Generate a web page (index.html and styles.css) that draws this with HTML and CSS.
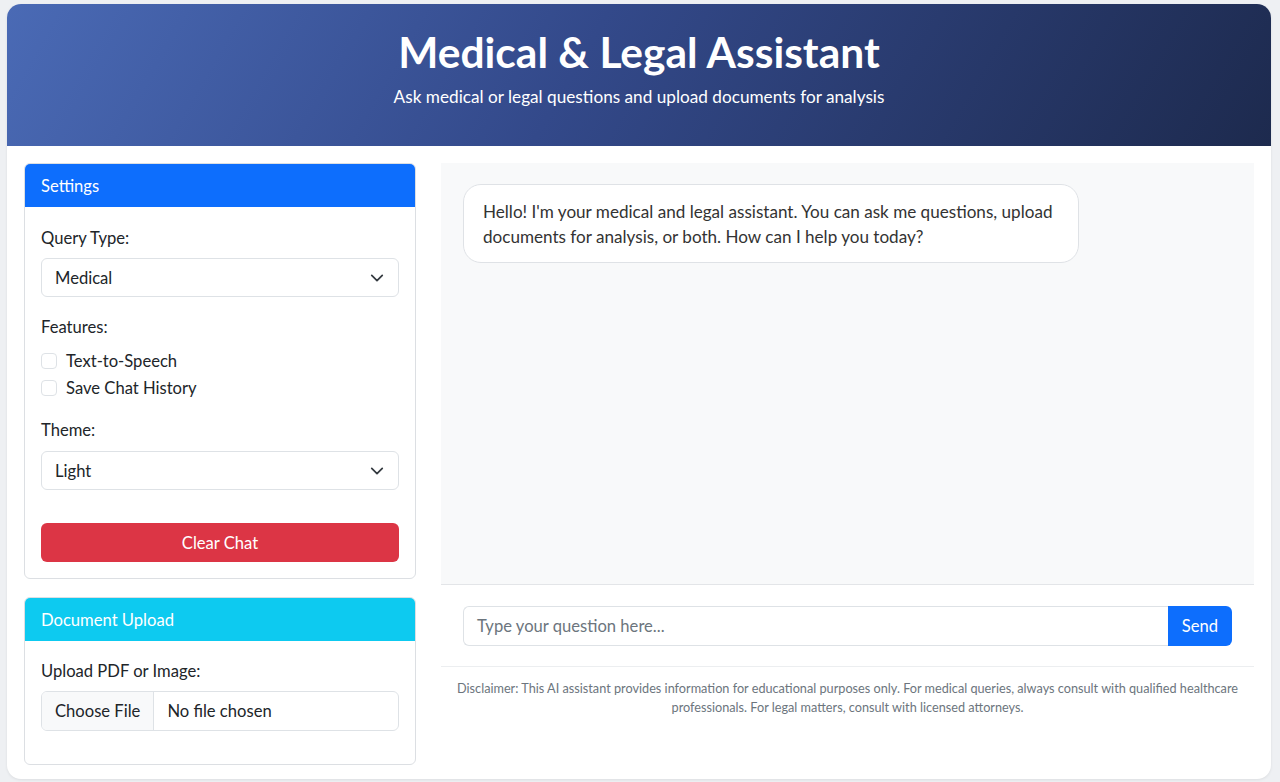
FILE: index.html
```html
<!DOCTYPE html>
<html lang="en">
<head>
<meta charset="utf-8">
<title>Medical &amp; Legal Assistant</title>
<link rel="stylesheet" href="styles.css">
</head>
<body>
<div class="app">
  <header class="hero">
    <h1 class="hero-title">Medical &amp; Legal Assistant</h1>
    <p class="hero-sub">Ask medical or legal questions and upload documents for analysis</p>
  </header>
  <main class="main">
    <aside class="side">
      <section class="card">
        <div class="card-head head-blue">Settings</div>
        <div class="card-body">
          <label class="lbl">Query Type:</label>
          <div class="select"><span>Medical</span>
            <svg class="chev" viewBox="0 0 16 16" width="16" height="16"><path fill="none" stroke="#343a40" stroke-linecap="round" stroke-linejoin="round" stroke-width="2" d="m2 5 6 6 6-6"/></svg>
          </div>
          <label class="lbl lbl-gap">Features:</label>
          <div class="check"><span class="box"></span>Text-to-Speech</div>
          <div class="check"><span class="box"></span>Save Chat History</div>
          <label class="lbl lbl-gap2">Theme:</label>
          <div class="select"><span>Light</span>
            <svg class="chev" viewBox="0 0 16 16" width="16" height="16"><path fill="none" stroke="#343a40" stroke-linecap="round" stroke-linejoin="round" stroke-width="2" d="m2 5 6 6 6-6"/></svg>
          </div>
          <button class="btn-danger">Clear Chat</button>
        </div>
      </section>
      <section class="card">
        <div class="card-head head-cyan">Document Upload</div>
        <div class="card-body card-body-up">
          <label class="lbl">Upload PDF or Image:</label>
          <div class="file"><span class="file-btn">Choose File</span><span class="file-name">No file chosen</span></div>
        </div>
      </section>
    </aside>
    <section class="chat">
      <div class="messages">
        <div class="bubble">Hello! I'm your medical and legal assistant. You can ask me questions, upload documents for analysis, or both. How can I help you today?</div>
      </div>
      <div class="composer">
        <div class="input-group">
          <div class="input">Type your question here...</div>
          <button class="send">Send</button>
        </div>
      </div>
      <p class="disclaimer">Disclaimer: This AI assistant provides information for educational purposes only. For medical queries, always consult with qualified healthcare professionals. For legal matters, consult with licensed attorneys.</p>
    </section>
  </main>
</div>
</body>
</html>
```
FILE: styles.css
```css
* { box-sizing: border-box; }
html, body { margin: 0; }
body {
  background: #eef0f3;
  font-family: "Lato", "Noto Sans", sans-serif;
  color: #212529;
  font-size: 16.6px;
  padding: 4px 9px 3px 7px;
}
.app {
  background: #fff;
  border-radius: 14px;
  overflow: hidden;
  height: 775px;
  box-shadow: 0 1px 3px rgba(0,0,0,0.08);
}
.hero {
  height: 142px;
  background: linear-gradient(120deg, #4a6ab5 0%, #33498a 45%, #1d2a4e 100%);
  color: #fff;
  text-align: center;
  padding-top: 23px;
}
.hero-title {
  margin: 0;
  font-size: 42.5px;
  font-weight: 700;
  line-height: 50px;
}
.hero-sub {
  margin: 8px 0 0;
  font-size: 17.2px;
  line-height: 24px;
}
.main {
  display: grid;
  grid-template-columns: 392px 1fr;
  gap: 25px;
  padding: 17px 17px 0 17px;
}
.side { display: flex; flex-direction: column; gap: 18px; }
.card {
  border: 1px solid #dcdfe3;
  border-radius: 6px;
  overflow: hidden;
}
.card-head {
  height: 43px;
  color: #fff;
  padding: 0 16px;
  display: flex;
  align-items: center;
}
.head-blue { background: #0d6efd; }
.head-cyan { background: #0dcaf0; }
.card-body { padding: 19px 16px 16px; }
.card-body-up { padding-top: 18px; padding-bottom: 33px; }
.lbl { display: block; line-height: 24px; margin-bottom: 8px; }
.lbl-gap { margin-top: 18px; margin-bottom: 10px; }
.lbl-gap2 { margin-top: 18px; margin-bottom: 9px; }
.select {
  height: 39px;
  border: 1px solid #dee2e6;
  border-radius: 6px;
  display: flex;
  align-items: center;
  justify-content: space-between;
  padding: 0 14px 0 13px;
  line-height: 24px;
}
.chev { width: 14px; height: 14px; }
.check {
  display: flex;
  align-items: center;
  line-height: 24px;
  margin-bottom: 3px;
}
.box {
  width: 16px; height: 16px;
  border: 1px solid #dee2e6;
  border-radius: 4px;
  margin-right: 9px;
  flex: none;
}
.btn-danger {
  display: block;
  width: 100%;
  height: 39px;
  margin-top: 33px;
  border: 0;
  border-radius: 6px;
  background: #dc3545;
  color: #fff;
  font: inherit;
}
.file {
  display: flex;
  height: 40px;
  border: 1px solid #dee2e6;
  border-radius: 6px;
  overflow: hidden;
}
.file-btn {
  background: #f8f9fa;
  border-right: 1px solid #dee2e6;
  padding: 0 13px;
  display: flex;
  align-items: center;
}
.file-name { padding: 0 13px; display: flex; align-items: center; }
.chat { display: flex; flex-direction: column; }
.messages {
  height: 422px;
  background: #f8f9fa;
  border-bottom: 1px solid #e3e5e8;
  padding: 21px 22px;
}
.bubble {
  width: 616px;
  background: #fff;
  border: 1px solid #dfe2e6;
  border-radius: 18px;
  padding: 14px 15px 13px 19px;
  font-size: 17.1px;
  line-height: 25px;
  color: #333;
}
.composer {
  padding: 21px 22px 20px;
  border-bottom: 1px solid #eceef0;
}
.input-group { display: flex; height: 40px; }
.input {
  flex: 1;
  border: 1px solid #dee2e6;
  border-right: 0;
  border-radius: 6px 0 0 6px;
  padding: 0 13px;
  display: flex;
  align-items: center;
  color: #6c757d;
}
.send {
  width: 64px;
  border: 0;
  border-radius: 0 6px 6px 0;
  background: #0d6efd;
  color: #fff;
  font: inherit;
}
.disclaimer {
  margin: 12px 0 0;
  text-align: center;
  font-size: 12.7px;
  line-height: 19px;
  color: #6c757d;
  padding: 0 12px;
}
```
